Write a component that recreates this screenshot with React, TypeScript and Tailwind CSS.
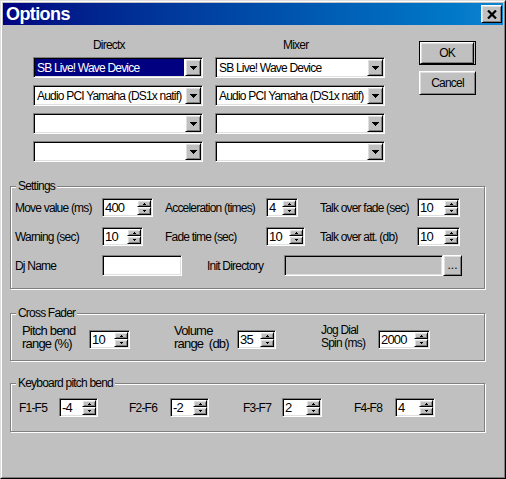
import React from 'react';

// classic 3D edges
const raised =
  'border border-t-white border-l-white border-r-black border-b-black shadow-[inset_1px_1px_0_#dfdfdf,inset_-1px_-1px_0_#808080]';
const sunken =
  'border border-t-[#808080] border-l-[#808080] border-r-white border-b-white shadow-[inset_1px_1px_0_#000,inset_-1px_-1px_0_#dfdfdf]';

function DownArrow() {
  return (
    <svg width="7" height="4" viewBox="0 0 7 4" shapeRendering="crispEdges">
      <path d="M0 0h7v1H0zM1 1h5v1H1zM2 2h3v1H2zM3 3h1v1H3z" fill="#000" />
    </svg>
  );
}

function TinyArrow({ up }: { up?: boolean }) {
  return (
    <svg width="3" height="2" viewBox="0 0 3 2" shapeRendering="crispEdges">
      {up ? (
        <path d="M1 0h1v1H1zM0 1h3v1H0z" fill="#000" />
      ) : (
        <path d="M0 0h3v1H0zM1 1h1v1H1z" fill="#000" />
      )}
    </svg>
  );
}

function Combo({ text, selected }: { text: string; selected?: boolean }) {
  return (
    <div className={`flex h-[21px] w-[170px] bg-white p-[1px] ${sunken}`}>
      <div className="flex min-w-0 flex-1 items-center overflow-hidden pr-[1px]">
        <div
          className={`flex h-full w-full items-center overflow-hidden whitespace-nowrap pl-[2px] ${
            selected ? 'bg-[#000080] text-white' : ''
          }`}
        >
          {text}
        </div>
      </div>
      <div className={`flex w-[16px] shrink-0 items-center justify-center bg-[#c0c0c0] ${raised}`}>
        <DownArrow />
      </div>
    </div>
  );
}

function Spin({ value, w }: { value: string; w: string }) {
  return (
    <div className={`flex h-[19px] shrink-0 bg-white p-[1px] ${sunken} ${w}`}>
      <div className="flex min-w-0 flex-1 items-center pl-[1px] text-[13px] leading-none">{value}</div>
      <div className="flex w-[14px] shrink-0 flex-col">
        <div className={`flex h-[7px] items-center justify-center bg-[#c0c0c0] ${raised}`}>
          <TinyArrow up />
        </div>
        <div className={`flex flex-1 items-center justify-center bg-[#c0c0c0] ${raised}`}>
          <TinyArrow />
        </div>
      </div>
    </div>
  );
}

function Group({ label, children }: { label: string; children: React.ReactNode }) {
  return (
    <div className="relative ml-[7px] w-[475px] border border-[#808080] shadow-[inset_1px_1px_0_#fff,1px_1px_0_#fff]">
      <span className="absolute left-[5px] top-[-8px] bg-[#c0c0c0] px-[2px] leading-[15px]">{label}</span>
      {children}
    </div>
  );
}

function DeviceColumn({ title, pad, items }: { title: string; pad: string; items: { text: string; selected?: boolean }[] }) {
  return (
    <div className="flex w-[170px] flex-col">
      <div className={`h-[16px] leading-[16px] ${pad}`}>{title}</div>
      <div className="mt-[4px] flex flex-col gap-[7px]">
        {items.map((it, i) => (
          <Combo key={i} text={it.text} selected={it.selected} />
        ))}
      </div>
    </div>
  );
}

export default function App() {
  const directx = [
    { text: 'SB Live! Wave Device', selected: true },
    { text: 'Audio PCI Yamaha (DS1x natif)' },
    { text: '' },
    { text: '' },
  ];
  const mixer = [
    { text: 'SB Live! Wave Device' },
    { text: 'Audio PCI Yamaha (DS1x natif)' },
    { text: '' },
    { text: '' },
  ];

  return (
    <div className="h-[479px] w-[506px] border border-t-[#dfdfdf] border-l-[#dfdfdf] border-r-black border-b-black bg-[#c0c0c0] font-['Liberation_Sans',Arial,sans-serif] text-[12px] tracking-[-0.8px] text-black">
      <div className="flex h-full flex-col border border-t-white border-l-white border-r-[#808080] border-b-[#808080] p-[1px]">
        {/* title bar */}
        <div className="flex h-[22px] shrink-0 items-center justify-between bg-linear-to-r from-[#000080] to-[#1084d0] pl-[3px] pr-[1px]">
          <span className="text-[18px] font-bold tracking-[-0.6px] text-white">Options</span>
          <button className={`flex h-[18px] w-[21px] items-center justify-center bg-[#c0c0c0] ${raised}`}>
            <svg width="10" height="9" viewBox="0 0 10 9">
              <path d="M1 0.5L9 8.5M9 0.5L1 8.5" stroke="#000" strokeWidth="2.2" />
            </svg>
          </button>
        </div>

        {/* devices */}
        <div className="mt-[12px] flex pl-[30px]">
          <div className="flex gap-[12px]">
            <DeviceColumn title="Directx" pad="pl-[60px]" items={directx} />
            <DeviceColumn title="Mixer" pad="pl-[68px]" items={mixer} />
          </div>
          <div className="ml-[34px] mt-[4px] flex flex-col gap-[6px]">
            <div className="border border-black">
              <button className={`flex h-[22px] w-[54px] items-center justify-center bg-[#c0c0c0] ${raised}`}>OK</button>
            </div>
            <button className={`flex h-[24px] w-[57px] items-center justify-center bg-[#c0c0c0] ${raised}`}>Cancel</button>
          </div>
        </div>

        {/* settings */}
        <div className="mt-[24px]">
          <Group label="Settings">
            <div className="flex flex-col pb-[12px] pl-[4px] pt-[11px]">
              <div className="grid h-[19px] grid-cols-[87px_63px_101px_54px_97px_auto] items-center">
                <span>Move value (ms)</span>
                <Spin value="400" w="w-[51px]" />
                <span>Acceleration (times)</span>
                <Spin value="4" w="w-[32px]" />
                <span>Talk over fade (sec)</span>
                <Spin value="10" w="w-[43px]" />
              </div>
              <div className="mt-[10px] grid h-[19px] grid-cols-[87px_63px_101px_54px_97px_auto] items-center">
                <span>Warning (sec)</span>
                <Spin value="10" w="w-[41px]" />
                <span>Fade time (sec)</span>
                <Spin value="10" w="w-[39px]" />
                <span>Talk over att. (db)</span>
                <Spin value="10" w="w-[43px]" />
              </div>
              <div className="mt-[9px] flex h-[21px] items-center">
                <span className="w-[87px]">Dj Name</span>
                <div className={`h-[21px] w-[80px] bg-white ${sunken}`} />
                <span className="ml-[25px] w-[77px]">Init Directory</span>
                <div className={`h-[21px] w-[159px] bg-[#c0c0c0] ${sunken}`} />
                <button className={`flex h-[21px] w-[19px] items-end justify-center bg-[#c0c0c0] pb-[4px] leading-none tracking-normal ${raised}`}>
                  ...
                </button>
              </div>
            </div>
          </Group>
        </div>

        {/* cross fader */}
        <div className="mt-[24px]">
          <Group label="Cross Fader">
            <div className="flex items-start pb-[10px] pl-[11px] pt-[10px] leading-[13px]">
              <div className="w-[67px] text-[13px]">
                Pitch bend
                <br />
                range (%)
              </div>
              <div className="mt-[6px]">
                <Spin value="10" w="w-[41px]" />
              </div>
              <div className="ml-[44px] w-[63px] whitespace-pre text-[13px]">{'Volume\nrange  (db)'}</div>
              <div className="mt-[6px]">
                <Spin value="35" w="w-[39px]" />
              </div>
              <div className="ml-[45px] w-[57px]">
                Jog Dial
                <br />
                Spin (ms)
              </div>
              <div className="mt-[6px]">
                <Spin value="2000" w="w-[52px]" />
              </div>
            </div>
          </Group>
        </div>

        {/* keyboard pitch bend */}
        <div className="mt-[22px]">
          <Group label="Keyboard pitch bend">
            <div className="flex items-center pb-[14px] pl-[8px] pt-[14px]">
              <span className="w-[40px]">F1-F5</span>
              <Spin value="-4" w="w-[39px]" />
              <span className="ml-[31px] w-[41px]">F2-F6</span>
              <Spin value="-2" w="w-[39px]" />
              <span className="ml-[34px] w-[39px]">F3-F7</span>
              <Spin value="2" w="w-[40px]" />
              <span className="ml-[32px] w-[41px]">F4-F8</span>
              <Spin value="4" w="w-[40px]" />
            </div>
          </Group>
        </div>
      </div>
    </div>
  );
}
